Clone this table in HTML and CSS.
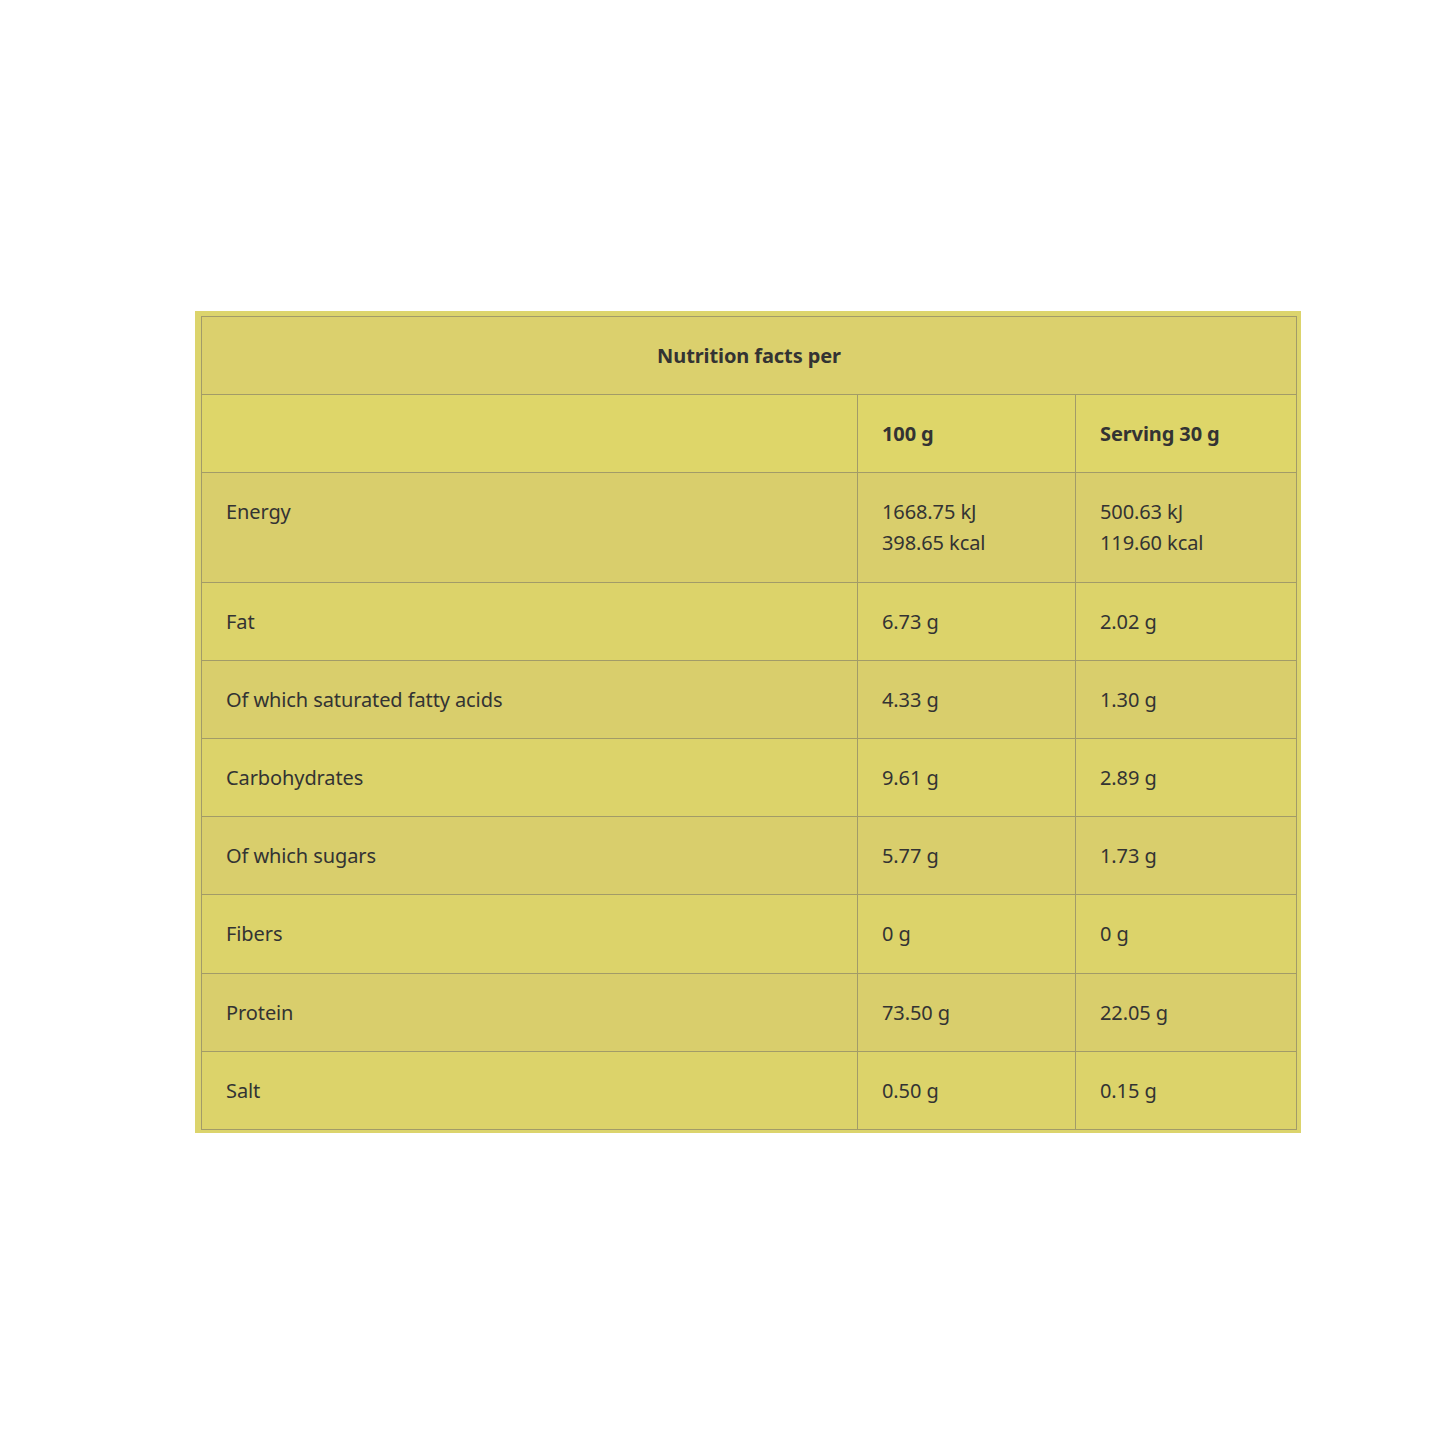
FILE: index.html
```html
<!DOCTYPE html>
<html>
<head>
<meta charset="utf-8">
<link rel="stylesheet" href="styles.css">
</head>
<body>
<div class="frame">
<table class="nutri">
  <colgroup><col class="c1"><col class="c2"><col class="c3"></colgroup>
  <tr class="title-row"><th colspan="3">Nutrition facts per</th></tr>
  <tr class="head-row"><th></th><th>100 g</th><th>Serving 30 g</th></tr>
  <tr class="r-a"><td>Energy</td><td>1668.75 kJ<br>398.65 kcal</td><td>500.63 kJ<br>119.60 kcal</td></tr>
  <tr class="r-b"><td>Fat</td><td>6.73 g</td><td>2.02 g</td></tr>
  <tr class="r-a"><td>Of which saturated fatty acids</td><td>4.33 g</td><td>1.30 g</td></tr>
  <tr class="r-b"><td>Carbohydrates</td><td>9.61 g</td><td>2.89 g</td></tr>
  <tr class="r-a"><td>Of which sugars</td><td>5.77 g</td><td>1.73 g</td></tr>
  <tr class="r-b"><td>Fibers</td><td>0 g</td><td>0 g</td></tr>
  <tr class="r-a"><td>Protein</td><td>73.50 g</td><td>22.05 g</td></tr>
  <tr class="r-b"><td>Salt</td><td>0.50 g</td><td>0.15 g</td></tr>
</table>
</div>
</body>
</html>
```
FILE: styles.css
```css
html, body {
  margin: 0;
  padding: 0;
  background: #ffffff;
}
body {
  font-family: "Noto Sans", "Open Sans", sans-serif;
  color: #333333;
}
.frame {
  margin: 311px 0 0 195px;
  width: 1095px;
  padding: 5px 5px 3px 6px;
  background: #dcd46c;
}
.nutri {
  width: 1095px;
  border-collapse: collapse;
  border: 1px solid #a29b68;
  table-layout: fixed;
  font-size: 20px;
  line-height: 31px;
  letter-spacing: -0.1px;
}
.nutri th, .nutri td {
  border: 1px solid #a29b68;
  padding: 23.1px 24px;
  text-align: left;
  vertical-align: top;
}
.nutri th { font-weight: 700; }
.title-row th {
  text-align: center;
  background: #dbd06d;
}
.head-row th { background: #ded669; }
.c1 { width: 656px; }
.c2 { width: 218px; }
.c3 { width: 221px; }
.r-a td { background: #d9ce6c; }
.r-b td { background: #dcd36a; }
```
